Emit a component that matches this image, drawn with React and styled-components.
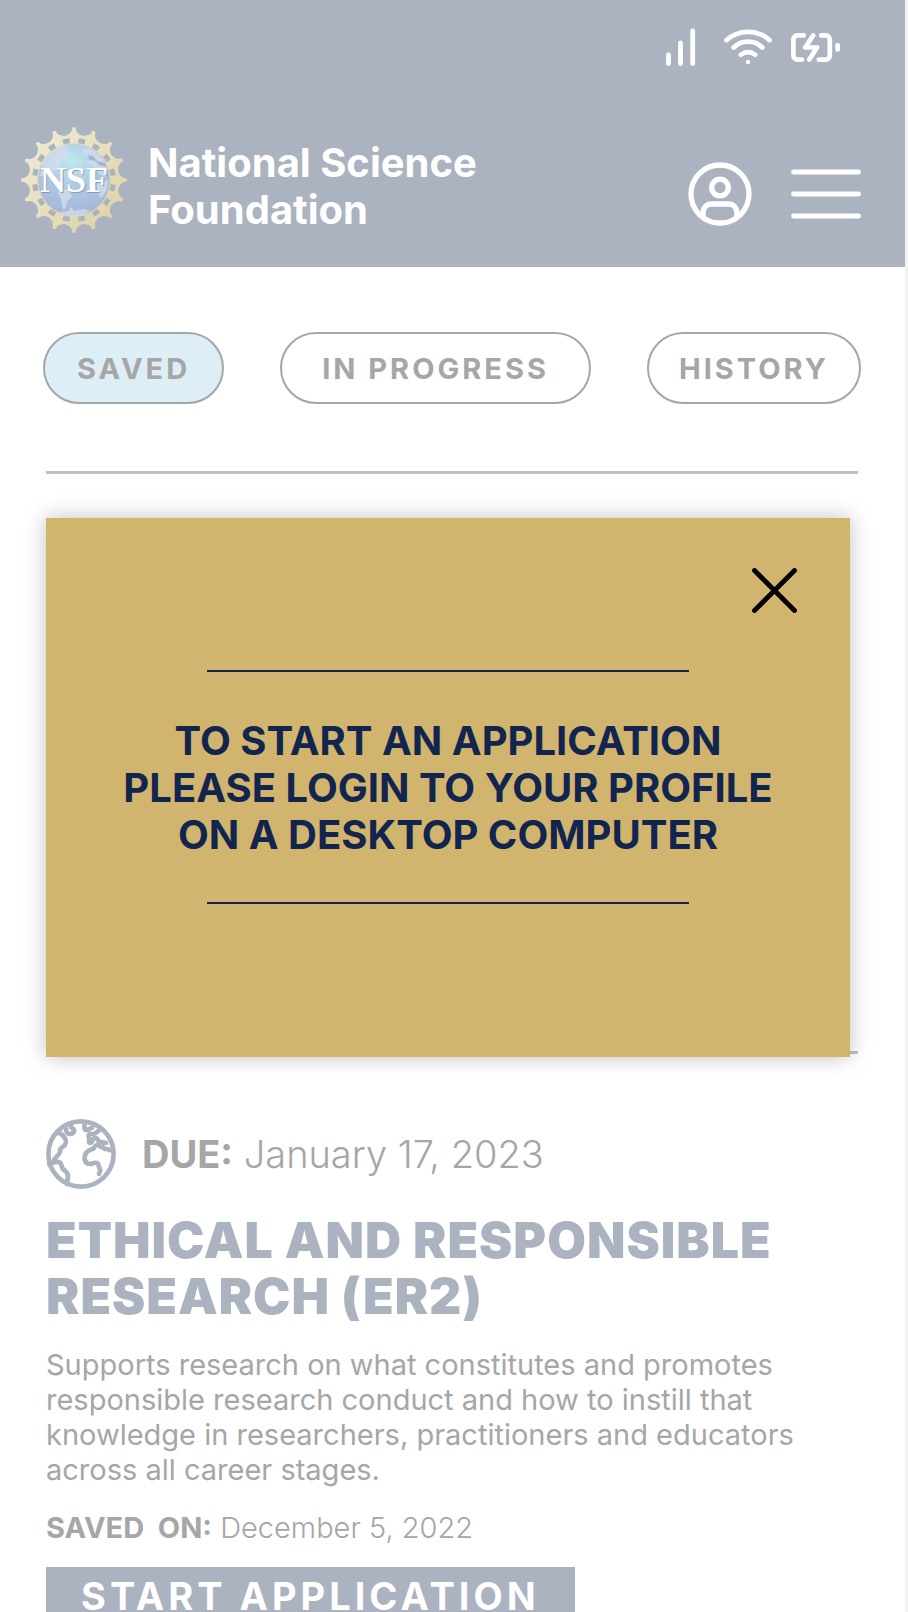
import React, { useState } from "react";
import styled, { createGlobalStyle } from "styled-components";

const GlobalStyle = createGlobalStyle`
  :root {
    --muted-navy: #abb2c0;
    --muted-text: #a6a6a6;
    --navy: #12254f;
    --gold: #d1b56e;
    --light-blue: #ddeef6;
  }

  * {
    box-sizing: border-box;
  }

  body {
    margin: 0;
    background: #f4f4f4;
    font-family: Inter, "Liberation Sans", sans-serif;
  }
`;

const Screen = styled.div`
  height: 100vh;
  margin-right: 3px;
  overflow: hidden;
  background: #fff;
  color: var(--muted-text);
`;

const Header = styled.header`
  background: var(--muted-navy);
  color: #fff;
  padding: 28px 44px 34px 21px;
`;

const StatusBar = styled.div`
  display: flex;
  justify-content: flex-end;
  align-items: center;
  gap: 19px;
  height: 38px;
  padding-right: 21px;
`;

const Banner = styled.div`
  display: flex;
  align-items: center;
  margin-top: 61px;
`;

const SiteName = styled.h1`
  flex: 1;
  margin: 0 0 0 21px;
  padding-top: 12px;
  font-size: 40px;
  font-weight: 700;
  line-height: 47px;
`;

const Actions = styled.nav`
  display: flex;
  align-items: center;
  gap: 39px;
  padding-top: 27px;
`;

const IconButton = styled.button`
  display: flex;
  padding: 0;
  border: 0;
  background: none;
  color: inherit;
  cursor: pointer;
`;

const Tabs = styled.div`
  display: flex;
  justify-content: space-between;
  padding: 65px 44px 0 43px;
`;

const Tab = styled.button`
  height: 72px;
  padding: 0 ${(props) => props.$pad}px;
  border: 2px solid var(--muted-text);
  border-radius: 36px;
  background: ${(props) => (props.$active ? "var(--light-blue)" : "transparent")};
  color: inherit;
  font-family: inherit;
  font-size: 29px;
  font-weight: 700;
  letter-spacing: 3px;
  cursor: pointer;
`;

const Content = styled.main`
  padding: 67px 47px 0 46px;
`;

const Rule = styled.hr`
  height: 3px;
  margin: 0;
  border: 0;
  background: #c1c1c1;
`;

const Dialog = styled.section`
  position: relative;
  display: flex;
  flex-direction: column;
  align-items: center;
  margin: 44px 8px -6px 0;
  padding: 50px 53px 153px;
  background: var(--gold);
  color: var(--navy);
  box-shadow: 0 0 20px rgba(0, 0, 0, 0.25);
`;

const CloseButton = styled(IconButton)`
  align-self: flex-end;
  color: #000;
`;

const DialogText = styled.p`
  width: 100%;
  margin: 57px 0 0;
  padding: 47px 0 46px;
  background:
    linear-gradient(var(--navy), var(--navy)) top / 482px 2px no-repeat,
    linear-gradient(var(--navy), var(--navy)) bottom / 482px 2px no-repeat;
  font-size: 40px;
  font-weight: 700;
  line-height: 47px;
  text-align: center;
  white-space: nowrap;
`;

const Due = styled.div`
  display: flex;
  align-items: center;
  gap: 26px;
  margin-top: 65px;
  font-size: 38px;
  font-weight: 300;
`;

const Strong = styled.strong`
  font-weight: 700;
  white-space: pre;
`;

const Title = styled.h2`
  margin: 23px 0 0;
  color: var(--muted-navy);
  font-size: 50px;
  font-weight: 900;
  line-height: 56px;
  letter-spacing: 1px;
  white-space: nowrap;
`;

const Summary = styled.p`
  margin: 23px 0 0;
  font-size: 29px;
  font-weight: 400;
  line-height: 35px;
  white-space: nowrap;
`;

const SavedOn = styled.p`
  margin: 23px 0 0;
  font-size: 29px;
  font-weight: 300;
  line-height: 35px;
`;

const StartButton = styled.button`
  margin-top: 22px;
  padding: 6px 35px;
  border: 0;
  background: var(--muted-navy);
  color: #fff;
  font-family: inherit;
  font-size: 38px;
  font-weight: 700;
  line-height: 47px;
  letter-spacing: 4px;
  cursor: pointer;
`;

const Line = styled.svg.attrs({
  fill: "none",
  stroke: "currentColor",
  strokeLinecap: "round",
  strokeLinejoin: "round",
  "aria-hidden": true,
})`
  display: block;
  flex: none;
`;

const SignalIcon = () => (
  <Line width="39" height="38" viewBox="0 0 39 38" strokeWidth="4.8">
    <path d="M2.5 27v8.5M14.5 15v20.5M26.7 3v32.5" />
  </Line>
);

const WifiIcon = () => (
  <Line width="48" height="36" viewBox="0 0 48 36" strokeWidth="4.7">
    <path d="M2.4 11.2A32 32 0 0 1 45.6 11.2M9.7 18.5A20.5 20.5 0 0 1 38.3 18.5M16.9 25.7A11 11 0 0 1 31.1 25.7" />
    <circle cx="24" cy="33" r="2.2" fill="currentColor" stroke="none" />
  </Line>
);

const BatteryIcon = () => (
  <Line width="49" height="29" viewBox="0 0 49 29" strokeWidth="4.7">
    <path d="M12.7 2.4H6.4a4 4 0 0 0-4 4v16.2a4 4 0 0 0 4 4h4.6M30.2 2.4h4.6a4 4 0 0 1 4 4v16.2a4 4 0 0 1-4 4h-7M22.2 2.4 14.2 14.5h12l-8 12M46.6 12v4.5" />
  </Line>
);

const ProfileIcon = () => (
  <Line width="64" height="64" viewBox="0 0 64 64" strokeWidth="5.3">
    <circle cx="32" cy="32" r="29" />
    <circle cx="32" cy="25.5" r="8.3" />
    <path d="M15.2 54v-4a8 8 0 0 1 8-8h17.6a8 8 0 0 1 8 8v4" />
  </Line>
);

const MenuIcon = () => (
  <Line width="70" height="50" viewBox="0 0 70 50" strokeWidth="4.8">
    <path d="M2.5 3h65M2.5 25h65M2.5 47h65" />
  </Line>
);

const CloseIcon = () => (
  <Line width="45" height="45" viewBox="0 0 45 45" strokeWidth="4.8">
    <path d="M2.5 2.5l40 40M42.5 2.5l-40 40" />
  </Line>
);

const EarthIcon = () => (
  <Line width="70" height="70" viewBox="0 0 70 70" strokeWidth="4.7" color="#abb2c0">
    <circle cx="35" cy="35" r="32.6" />
    <path d="M11 14c4-1 5 2 7 4 3 3 2 7 0 9-2 1-4 2-4 5 0 4-3 4-6 9" />
    <path d="M3 45c4-1 5-3 10-2 3 1 2 5 4 7 3 3 5 3 5 7 0 3-1 4-1 8" />
    <path d="M20 10c0 5 4 6 7 4 3-3 0-4-2-6V4" />
    <path d="M39 4c-1 4-1 7 2 7 2 0 2-2 5-2M55 10c-4 2-4 5-8 5-5-1-5 2-4 4 1 3-1 4 1 5 3 0 2-5 5-5 4 0 2 4 5 4 2-1 3 1 6 1" />
    <path d="M66 31c-4 1-4-2-6-1s-2-3-5-2c-3-3-6-2-7 1-2 2-5 1-8 5-3 5-1 11 4 11 3 0 4-2 7-1 3 2 1 4 3 6 1 2-1 4-1 5" />
  </Line>
);

const polar = (r, deg) => {
  const a = (deg * Math.PI) / 180;
  return `${(r * Math.sin(a)).toFixed(2)} ${(-r * Math.cos(a)).toFixed(2)}`;
};

const teeth = Array.from({ length: 16 }, (_, i) => i * 22.5);

const gearPath =
  teeth
    .map(
      (a, i) =>
        `${i ? "L" : "M"}${polar(52.8, a - 1.8)}L${polar(52.8, a + 1.8)}` +
        `C${polar(47.5, a + 2.2)} ${polar(46, a + 6)} ${polar(45, a + 11.25)}` +
        `C${polar(46, a + 16.5)} ${polar(47.5, a + 20.3)} ${polar(52.8, a + 20.7)}`
    )
    .join("") + "Z";

const holePath = teeth
  .map((a) => `M${polar(39.4, a + 6.4)}A39.4 39.4 0 0 1 ${polar(39.4, a + 16.1)}`)
  .join("");

const Logo = () => (
  <svg width="106" height="106" viewBox="-53 -53 106 106" role="img" aria-label="NSF">
    <defs>
      <linearGradient id="gold" x1="0" y1="0" x2="1" y2="1">
        <stop offset="0" stopColor="#f1edd9" />
        <stop offset="1" stopColor="#dccfa2" />
      </linearGradient>
      <radialGradient id="sea" cx="0.48" cy="0.25" r="0.78">
        <stop offset="0" stopColor="#bfe8f1" />
        <stop offset="0.5" stopColor="#acc8e2" />
        <stop offset="1" stopColor="#a5b4d5" />
      </radialGradient>
    </defs>
    <path d={gearPath} fill="url(#gold)" />
    <path d={holePath} fill="none" stroke="#abb2c0" strokeWidth="5" />
    <circle r="36.2" fill="url(#sea)" stroke="#dcd5b5" strokeWidth="1" />
    <g fill="#d5deee" opacity="0.75">
      <path d="M-32-16C-28-25-20-31-12-34l7 1-3 5 5 2-4 5-5 1-2 7-7 5-2 6-5-4-6 3z" />
      <path d="M8-30l7-2c9 4 16 12 19 21l-3 8-7-4-5-7-7-3 3-6-7-3z" />
      <path d="M-14 8l8 2 4 6-5 6-1 6-3 2-2-11-3-6z" />
      <path d="M23 4l11-4-1 10-6 8-4-6z" />
      <path d="M-15 32l9-1 3-4 3 4 10-2 6 2C8 38-7 38-15 32z" />
    </g>
    <path d="M14-25l5 1 4 5 8 2 2 4-8-2-4-4-6-1z" fill="#a3b7d4" />
    <text
      x="1"
      y="13"
      textAnchor="middle"
      fontFamily="Liberation Serif, serif"
      fontSize="36"
      fontWeight="700"
      fill="#8f9ab4"
      aria-hidden="true"
    >
      NSF
    </text>
    <text
      x="0"
      y="12"
      textAnchor="middle"
      fontFamily="Liberation Serif, serif"
      fontSize="36"
      fontWeight="700"
      fill="#fff"
    >
      NSF
    </text>
  </svg>
);

const tabs = [
  { label: "SAVED", pad: 32 },
  { label: "IN PROGRESS", pad: 40 },
  { label: "HISTORY", pad: 30 },
];

const App = () => {
  const [currentTab, setCurrentTab] = useState("SAVED");
  const [open, setOpen] = useState(true);

  return (
    <>
      <GlobalStyle />
      <Screen>
        <Header>
          <StatusBar>
            <SignalIcon />
            <WifiIcon />
            <BatteryIcon />
          </StatusBar>
          <Banner>
            <Logo />
            <SiteName>
              National Science
              <br />
              Foundation
            </SiteName>
            <Actions>
              <IconButton aria-label="Profile">
                <ProfileIcon />
              </IconButton>
              <IconButton aria-label="Menu">
                <MenuIcon />
              </IconButton>
            </Actions>
          </Banner>
        </Header>
        <Tabs>
          {tabs.map((tab) => (
            <Tab
              key={tab.label}
              $pad={tab.pad}
              $active={tab.label === currentTab}
              onClick={() => setCurrentTab(tab.label)}
            >
              {tab.label}
            </Tab>
          ))}
        </Tabs>
        <Content>
          <Rule />
          {open && (
            <Dialog role="dialog">
              <CloseButton aria-label="Close" onClick={() => setOpen(false)}>
                <CloseIcon />
              </CloseButton>
              <DialogText>
                TO START AN APPLICATION
                <br />
                PLEASE LOGIN TO YOUR PROFILE
                <br />
                ON A DESKTOP COMPUTER
              </DialogText>
            </Dialog>
          )}
          <Rule />
          <Due>
            <EarthIcon />
            <span>
              <Strong>DUE:</Strong> January 17, 2023
            </span>
          </Due>
          <Title>
            ETHICAL AND RESPONSIBLE
            <br />
            RESEARCH (ER2)
          </Title>
          <Summary>
            Supports research on what constitutes and promotes
            <br />
            responsible research conduct and how to instill that
            <br />
            knowledge in researchers, practitioners and educators
            <br />
            across all career stages.
          </Summary>
          <SavedOn>
            <Strong>{"SAVED  ON:"}</Strong> December 5, 2022
          </SavedOn>
          <StartButton>START APPLICATION</StartButton>
        </Content>
      </Screen>
    </>
  );
};

export default App;
